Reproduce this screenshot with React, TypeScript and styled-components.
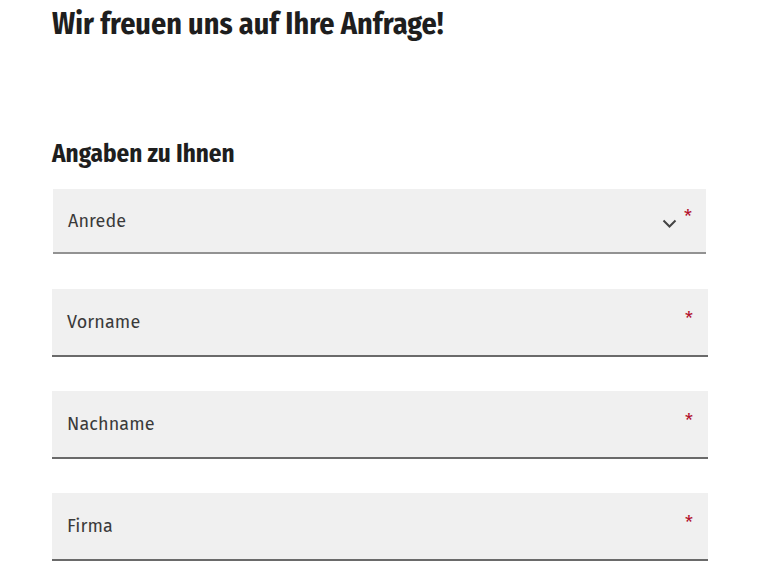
import styled, { createGlobalStyle } from "styled-components";

const GlobalStyle = createGlobalStyle`
  html, body {
    margin: 0;
    padding: 0;
    background: #ffffff;
  }
  body {
    font-family: "Fira Sans", "Open Sans", "Liberation Sans", sans-serif;
    color: #222;
  }
`;

const Page = styled.div`
  padding: 0 60px 0 52px;
`;

const Title = styled.h1`
  margin: 0;
  padding-top: 6px;
  font-family: "Fira Sans Condensed", "Fira Sans", "Liberation Sans", sans-serif;
  font-weight: 700;
  font-size: 30px;
  line-height: 36px;
  color: #1e1e1e;
`;

const Section = styled.section`
  margin-top: 97px;
`;

const SectionTitle = styled.h2`
  margin: 0 0 20px;
  font-family: "Fira Sans Condensed", "Fira Sans", "Liberation Sans", sans-serif;
  font-weight: 700;
  font-size: 25px;
  line-height: 30px;
  color: #1e1e1e;
`;

const Fields = styled.div`
  display: flex;
  flex-direction: column;
  gap: 34px;
`;

const Field = styled.label<{ $select?: boolean }>`
  position: relative;
  display: flex;
  align-items: center;
  height: ${(p) => (p.$select ? "63px" : "66px")};
  margin: ${(p) => (p.$select ? "0 2px 1px 1px" : "0")};
  padding: 0 15px;
  background: #f0f0f0;
  border-bottom: 2px solid ${(p) => (p.$select ? "#929292" : "#6a6a6a")};
  box-sizing: content-box;
`;

const Label = styled.span`
  flex: 1;
  font-size: 18px;
  letter-spacing: 0.1px;
  color: #3a3a3a;
`;

const Chevron = styled.svg`
  width: 15px;
  height: 9px;
  margin-right: 14px;
  margin-top: 6px;
`;

const Required = styled.span<{ $select?: boolean }>`
  position: absolute;
  right: ${(p) => (p.$select ? "14px" : "15px")};
  top: ${(p) => (p.$select ? "19px" : "21px")};
  font-size: 18px;
  line-height: 18px;
  color: #b3102c;
`;

const fields = ["Vorname", "Nachname", "Firma"];

export default function App() {
  return (
    <Page>
      <GlobalStyle />
      <Title>Wir freuen uns auf Ihre Anfrage!</Title>
      <Section>
        <SectionTitle>Angaben zu Ihnen</SectionTitle>
        <Fields>
          <Field $select>
            <Label>Anrede</Label>
            <Chevron viewBox="0 0 15 9">
              <path d="M1.5 1.5 L7.5 7.5 L13.5 1.5" fill="none" stroke="#444" strokeWidth="2" />
            </Chevron>
            <Required $select>*</Required>
          </Field>
          {fields.map((f) => (
            <Field key={f}>
              <Label>{f}</Label>
              <Required>*</Required>
            </Field>
          ))}
        </Fields>
      </Section>
    </Page>
  );
}
